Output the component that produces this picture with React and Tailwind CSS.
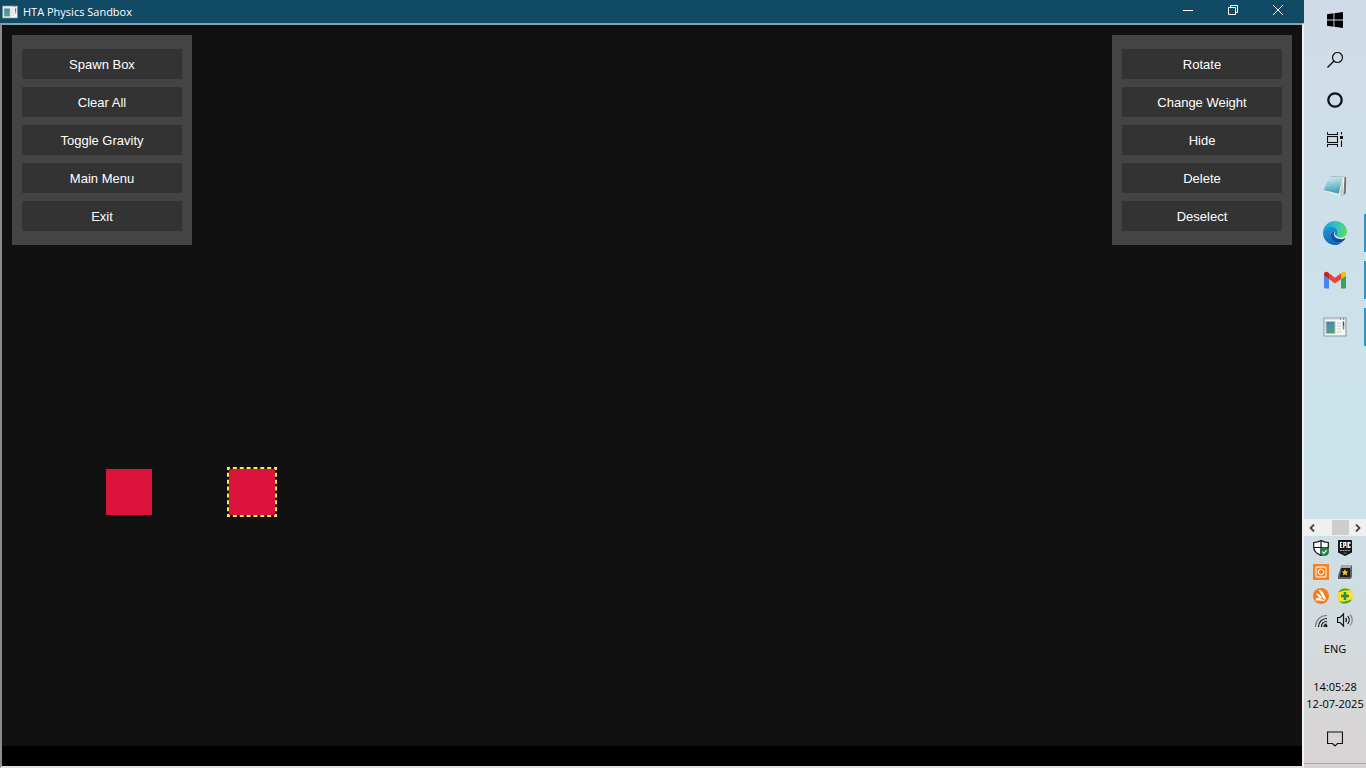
import React, { useState } from 'react';

const menuItems = ['Spawn Box', 'Clear All', 'Toggle Gravity', 'Main Menu', 'Exit'];
const objectItems = ['Rotate', 'Change Weight', 'Hide', 'Delete', 'Deselect'];

const initialBoxes = [
  { id: 1, x: 104, y: 444 },
  { id: 2, x: 227, y: 444 },
];

const AppIcon = ({ className }) => (
  <svg viewBox="0 0 24 20" className={className} aria-hidden="true">
    <defs>
      <linearGradient id="appPic" x1="0" y1="0" x2=".4" y2="1">
        <stop offset="0" stopColor="#4a78ad" />
        <stop offset=".5" stopColor="#4a96a0" />
        <stop offset="1" stopColor="#4ba273" />
      </linearGradient>
    </defs>
    <rect x="1" y="1" width="22" height="18" fill="#f6f7f8" stroke="#8d9196" />
    <path d="M1.500 2h21" stroke="#c6cace" />
    <path d="M17 2h1M20 2h1" stroke="#4a4f55" />
    <rect x="3" y="4.500" width="9" height="12" fill="url(#appPic)" stroke="#b4c0ca" />
    <path d="M14 6h4M14 9h4M14 12h4M14 15h4" stroke="#c6c9cc" />
    <path d="M20.500 4.500v5" stroke="#2a5f9c" strokeWidth="1.500" />
    <path d="M20.500 9.500v3" stroke="#4aa56c" strokeWidth="1.500" />
  </svg>
);

const WindowsIcon = () => (
  <svg viewBox="0 0 16 16" className="w-4 h-4">
    <path d="M0 2.200 6.500 1.300V7.500H0zM7.400 1.200 16 0v7.500H7.400zM0 8.500h6.500v6.200L0 13.800zM7.400 8.500H16V16l-8.600-1.200z" fill="#000" />
  </svg>
);

const SearchIcon = () => (
  <svg viewBox="0 0 16 16" className="w-4 h-4" fill="none" stroke="#111">
    <circle cx="10.500" cy="5.500" r="5" strokeWidth="1.200" />
    <path d="M7 9 .5 15.500" strokeWidth="1.400" />
  </svg>
);

const CortanaIcon = () => (
  <svg viewBox="0 0 16 16" className="w-4 h-4">
    <circle cx="8" cy="8" r="6.700" fill="none" stroke="#10131a" strokeWidth="2.300" />
  </svg>
);

const TaskViewIcon = () => (
  <svg viewBox="0 0 16 16" className="w-4 h-4" fill="none" stroke="#111" strokeWidth="1.100">
    <path d="M.5 0v2.500h10V0M.5 15v-2.500h10V15" />
    <rect x=".5" y="4.500" width="10" height="6" />
    <path d="M14.500 0v2.500M14.500 8.500V15" />
    <rect x="13" y="4" width="3" height="3" fill="#111" stroke="none" />
  </svg>
);

const NotepadIcon = () => (
  <svg viewBox="0 0 24 24" className="w-6 h-6">
    <defs>
      <linearGradient id="note" x1=".3" y1="0" x2=".5" y2="1">
        <stop offset="0" stopColor="#d3edf2" />
        <stop offset=".5" stopColor="#83c6d5" />
        <stop offset="1" stopColor="#3c97b0" />
      </linearGradient>
    </defs>
    <path d="m20 2 3.200 1.200-.4 16.300-4.300 2.500z" fill="#7c7262" />
    <path d="M8 1.800 21.500 2.500 20.500 20.500l-4 1.500z" fill="#eef1f2" />
    <path d="M20 3.500 19.500 20.500l-3 1z" fill="#c3c9ca" />
    <path d="M6.500 2.500 19.500 3.500 15.800 19.800.5 16.300z" fill="url(#note)" />
    <path d="M.5 16.300 15.800 19.800l.8 2L1.500 18z" fill="#dfeaed" />
    <path d="m7 2.200 13 .8" stroke="#a5b6ba" />
  </svg>
);

const EdgeIcon = () => (
  <svg viewBox="0 0 24 24" className="w-6 h-6">
    <defs>
      <linearGradient id="edgeTop" x1="0" y1=".4" x2="1" y2=".5">
        <stop offset="0" stopColor="#229bdc" />
        <stop offset=".5" stopColor="#2dc2c9" />
        <stop offset="1" stopColor="#5bdb5a" />
      </linearGradient>
      <linearGradient id="edgeMid" x1="0" y1="0" x2=".3" y2="1">
        <stop offset="0" stopColor="#1f97dc" />
        <stop offset="1" stopColor="#1068ba" />
      </linearGradient>
      <linearGradient id="edgeLow" x1="0" y1="0" x2="1" y2="1">
        <stop offset="0" stopColor="#0f5fae" />
        <stop offset="1" stopColor="#123f7c" />
      </linearGradient>
    </defs>
    <path d="M0 12C0 5 5.500 0 12 0s12 4.800 12 10.500c0 3.900-3 6-6.200 6-2.600 0-4.300-.9-4.300-1.800 0-.7 1-1 1-2.900 0-2.500-2.600-4.800-6.200-4.800C4 7 .8 9.500 0 12z" fill="url(#edgeTop)" />
    <path d="M0 12C.6 8.600 4 6 8.300 6c3.700 0 6.200 2.600 6.200 5.800 0 1.900-1 2.200-1 2.900-1.700-.5-2.200-2.200-1.300-4.500-2.500.2-4.400 1-4.400 2.800 0 4.700 4.300 8.500 8.400 8.500 1.400 0 2.300-.3 3-.6C17.400 22.800 14.800 24 12 24 5.400 24 0 18.700 0 12z" fill="url(#edgeMid)" />
    <path d="M12.200 10.200C9.700 10 8 11.500 7.800 13.500c-.2 4.500 3.500 8 8.400 8.100 2.700.1 5-1.800 6.100-4 .2-.5-.2-.7-.6-.4-1 .6-2.400 1-3.900 1-4 0-7-2.200-7-5.100 0-1.100.5-2.100 1.400-2.900z" fill="url(#edgeLow)" />
  </svg>
);

const GmailIcon = () => (
  <svg viewBox="0 0 24 18" className="w-6 h-5">
    <path d="M1 4.500 6 8v9.500H2.500A1.500 1.500 0 0 1 1 16z" fill="#4285f4" />
    <path d="M23 4.500 18 8v9.500h3.500A1.500 1.500 0 0 0 23 16z" fill="#34a853" />
    <path d="M18 2.300V8l5-3.500V3c0-2.200-2.300-3-3.900-1.800z" fill="#fbbc04" />
    <path d="M6 8V2.300L12 6.800l6-4.500V8l-6 4.500z" fill="#ea4335" />
    <path d="M1 3v1.500L6 8V2.300L4.900 1.200C3.300 0 1 .8 1 3z" fill="#c5221f" />
  </svg>
);

const ShieldIcon = () => (
  <svg viewBox="0 0 16 16" className="w-4 h-4">
    <path d="M8 .6C6 2 3.500 2.500.7 2.500V7c0 4 3 6.700 7.300 8.400C12.300 13.700 15.300 11 15.300 7V2.500C12.500 2.500 10 2 8 .6z" fill="#fff" stroke="#111" strokeWidth="1.200" />
    <path d="M8 1v14M1 7.500h14" stroke="#111" strokeWidth="1.200" />
    <circle cx="11.500" cy="11.500" r="4.500" fill="#18864b" />
    <path d="m9.300 11.600 1.600 1.600 2.900-3.100" fill="none" stroke="#fff" strokeWidth="1.300" />
  </svg>
);

const EpicIcon = () => (
  <svg viewBox="0 0 16 16" className="w-4 h-4">
    <path d="M2 0h12a1 1 0 0 1 1 1v11.500L8 16l-7-3.500V1a1 1 0 0 1 1-1z" fill="#15171a" />
    <g fill="none" stroke="#fff" strokeWidth="1.100">
      <path d="M5.300 2.500H3.500v5h1.800M3.500 5h1.500" />
      <path d="M6.700 8V2.500h1.600v3H6.700" />
      <path d="M10 2v6" />
      <path d="M13 4V2.500h-1.500v5H13V6" />
    </g>
    <path d="M3 10.500h10" stroke="#a9adb0" strokeWidth="1.200" strokeDasharray="2 .6" />
    <path d="M6.500 13h3" stroke="#777b7e" />
  </svg>
);

const CameraIcon = () => (
  <svg viewBox="0 0 16 16" className="w-4 h-4">
    <rect width="16" height="16" fill="#f58220" />
    <g fill="none" stroke="#fff">
      <rect x="3" y="3" width="10" height="10" rx="1" />
      <circle cx="8" cy="8" r="2.800" />
    </g>
    <path d="M3 5.500V3h2.500M10.500 13H13v-2.500" stroke="#ffd8b0" fill="none" />
  </svg>
);

const StarIcon = () => (
  <svg viewBox="0 0 16 16" className="w-4 h-4">
    <path d="M4.500 1H15v12l-1.500 2H1V12z" fill="#5f6267" />
    <path d="M4.500 1H15l-2 3H3.800z" fill="#a4a7ac" />
    <path d="M4.500 4H13v9H3z" fill="#191a1c" />
    <path d="m8 5 1 2.300 2.500.2-1.900 1.600.6 2.400L8 10.200l-2.200 1.300.6-2.400-1.900-1.600L7 7.300z" fill="#f5c733" />
  </svg>
);

const AvastIcon = () => (
  <svg viewBox="0 0 16 16" className="w-4 h-4">
    <circle cx="8" cy="8" r="8" fill="#f57c1f" />
    <path d="M5.500 2.200c2-1 4 1 5.200 3.600 1 2.200 2 4.500 2.300 6.200L10.300 10.500C9 7.500 7.300 4.500 5.500 2.200z" fill="#fff" />
    <path d="M3.300 5.200c2.300.3 4.600 2.300 6 5L7 9.800C5.200 9 3.800 7.200 3.300 5.200zM2.500 12.600C2.800 10.600 4.500 9 6.600 10l6 2.900c-3.500-.3-6.800-.8-10.100-.3z" fill="#fff" />
  </svg>
);

const PlusIcon = () => (
  <svg viewBox="0 0 16 16" className="w-4 h-4">
    <circle cx="8" cy="8" r="8" fill="#f7de2f" />
    <path d="M1 4.500C4 0 10-1 14 2.800 10 1.700 6 2.800 1 4.500zM15 11.500C12 16 6 17 2 13.200c4 1.100 8 0 13-1.700z" fill="#37a13f" />
    <path d="M8 4v8M4 8h8" stroke="#25913a" strokeWidth="2.600" />
  </svg>
);

const WifiIcon = () => (
  <svg viewBox="0 0 16 16" className="w-4 h-4" fill="none" stroke="#111" strokeWidth="1.200">
    <path d="M2.500 15C2.500 8.500 7 3.500 14 3.500" stroke="#777" />
    <path d="M5.500 15c0-5 3.500-8.500 8.500-8.500M8.500 15c0-3.500 2-5.500 5.500-5.500M11 15c0-1.800 1.200-3 3-3" />
    <circle cx="13.300" cy="14" r="1.200" fill="#111" stroke="none" />
  </svg>
);

const VolumeIcon = () => (
  <svg viewBox="0 0 16 16" className="w-4 h-4" fill="none" stroke="#111" strokeWidth="1.200">
    <path d="M.6 5.500h2.500L6.500 2v12l-3.400-3.500H.6z" />
    <path d="M8.600 6c1 1.200 1 2.800 0 4M10.700 4.200c2 2.200 2 5.400 0 7.600" />
    <path d="M13 2.500c3 3 3 8 0 11" stroke="#888" />
  </svg>
);

const NoticeIcon = () => (
  <svg viewBox="0 0 16 16" className="w-4 h-4" fill="none" stroke="#111" strokeWidth="1.200">
    <path d="M.5 1h15v11.500h-5L8 15l-2.500-2.500h-5z" />
  </svg>
);

const systemItems = [
  { label: 'Start', Icon: WindowsIcon },
  { label: 'Search', Icon: SearchIcon },
  { label: 'Cortana', Icon: CortanaIcon },
  { label: 'Task View', Icon: TaskViewIcon },
];

const pinnedApps = [
  { label: 'Notepad', icon: <NotepadIcon />, running: false },
  { label: 'Edge', icon: <EdgeIcon />, running: true },
  { label: 'Gmail', icon: <GmailIcon />, running: true },
  { label: 'HTA Physics Sandbox', icon: <AppIcon className="w-6 h-5" />, running: true },
];

const trayItems = [
  { label: 'Security', Icon: ShieldIcon },
  { label: 'Epic Games', Icon: EpicIcon },
  { label: 'Capture', Icon: CameraIcon },
  { label: 'Star', Icon: StarIcon },
  { label: 'Avast', Icon: AvastIcon },
  { label: 'Protection', Icon: PlusIcon },
  { label: 'Network', Icon: WifiIcon },
  { label: 'Volume', Icon: VolumeIcon },
];

const Panel = ({ items, onAction }) => (
  <div className="relative z-10 flex flex-col gap-2 w-[180px] px-2.5 py-3.5 bg-[#444]">
    {items.map((item) => (
      <button
        key={item}
        type="button"
        onClick={() => onAction(item)}
        className="h-[30px] pt-0.5 bg-[#333] text-white text-[13px] leading-4 hover:bg-[#555]"
      >
        {item}
      </button>
    ))}
  </div>
);

const TitleBar = () => (
  <header className="flex items-center h-[23px] bg-[#114a65] text-white">
    <AppIcon className="w-4 h-3.5 ml-0.5" />
    <h1 className="ml-[5px] text-[11px] leading-4 font-['Open_Sans',sans-serif]">HTA Physics Sandbox</h1>
    <div className="ml-auto flex pr-1 pb-1">
      <button type="button" aria-label="Minimize" className="flex items-center justify-center w-[45px] h-5">
        <svg viewBox="0 0 10 10" className="w-2.5 h-2.5" stroke="#fff"><path d="M0 5.500h10" /></svg>
      </button>
      <button type="button" aria-label="Restore" className="flex items-center justify-center w-[45px] h-5">
        <svg viewBox="0 0 10 10" className="w-2.5 h-2.5" stroke="#fff" fill="none">
          <path d="M.5 2.500h7v7h-7zM2.500 2.500v-2h7v7h-2" />
        </svg>
      </button>
      <button type="button" aria-label="Close" className="flex items-center justify-center w-[45px] h-5">
        <svg viewBox="0 0 10 10" className="w-2.5 h-2.5" stroke="#fff"><path d="m0 0 10 10M10 0 0 10" /></svg>
      </button>
    </div>
  </header>
);

const Box = ({ box, selected, onSelect }) => (
  <button
    type="button"
    aria-label={`Box ${box.id}`}
    onClick={() => onSelect(box.id)}
    className="absolute w-[46px] h-[46px] bg-[#dc143c]"
    style={{ left: box.x, top: box.y }}
  >
    {selected && (
      <svg viewBox="0 0 50 50" className="absolute -top-0.5 -left-0.5 w-[50px] h-[50px] max-w-none">
        <rect x="1" y="1" width="48" height="48" fill="none" stroke="#ffeb3b" strokeWidth="2" strokeDasharray="4 2.857" strokeDashoffset="2" />
      </svg>
    )}
  </button>
);

const Taskbar = () => (
  <aside className="flex flex-col w-[62px] shrink-0 bg-linear-to-b from-[#d0dce7] via-[#cae4ec] via-60% to-[#d9d3d3] text-black font-['Open_Sans',sans-serif]">
    <nav className="flex flex-col">
      {systemItems.map(({ label, Icon }) => (
        <button key={label} type="button" aria-label={label} className="flex items-center justify-center h-10">
          <Icon />
        </button>
      ))}
    </nav>
    <nav className="flex flex-col gap-px mt-[3px]">
      {pinnedApps.map(({ label, icon, running }) => (
        <button key={label} type="button" aria-label={label} className="relative flex items-center justify-center h-[46px]">
          {icon}
          {running && <span className="absolute right-0 top-1 bottom-1 w-0.5 bg-[#2f93c4]" />}
        </button>
      ))}
    </nav>
    <div className="mt-auto flex items-center justify-between h-[17px] bg-[#f0f0f0]">
      <button type="button" aria-label="Scroll left" className="flex items-center justify-center w-4 h-4">
        <svg viewBox="0 0 8 8" className="w-2 h-2" fill="none" stroke="#444" strokeWidth="1.800"><path d="M6 .5 2.500 4 6 7.500" /></svg>
      </button>
      <div className="ml-auto w-[17px] h-[15px] bg-[#cdcdcd]" />
      <button type="button" aria-label="Scroll right" className="flex items-center justify-center w-[17px] h-4">
        <svg viewBox="0 0 8 8" className="w-2 h-2" fill="none" stroke="#444" strokeWidth="1.800"><path d="M2 .5 5.500 4 2 7.500" /></svg>
      </button>
    </div>
    <div className="grid grid-cols-2 px-[5px] mr-1">
      {trayItems.map(({ label, Icon }) => (
        <button key={label} type="button" aria-label={label} className="flex items-center justify-center h-6">
          <Icon />
        </button>
      ))}
    </div>
    <button type="button" className="h-8 pt-0.5 text-[11px] leading-4">ENG</button>
    <div className="mt-3.5 text-center text-[11px] leading-[17px] whitespace-nowrap">
      <p>14:05:28</p>
      <p>12-07-2025</p>
    </div>
    <button type="button" aria-label="Notifications" className="flex items-center justify-center h-[51px] pt-0.5">
      <NoticeIcon />
    </button>
    <div className="h-[5px] border-t border-[#a5a3a5]" />
  </aside>
);

const App = () => {
  const [boxes, setBoxes] = useState(initialBoxes);
  const [selectedId, setSelectedId] = useState(2);

  const handleAction = (action) => {
    if (action === 'Spawn Box') {
      setBoxes([...boxes, { id: Date.now(), x: 300 + boxes.length * 60, y: 444 }]);
    } else if (action === 'Clear All') {
      setBoxes([]);
    } else if (action === 'Delete') {
      setBoxes(boxes.filter((box) => box.id !== selectedId));
    } else if (action === 'Deselect') {
      setSelectedId(null);
    }
  };

  return (
    <div className="flex h-screen overflow-hidden font-['Liberation_Sans',Arial,sans-serif]">
      <div className="flex flex-col flex-1 min-w-0">
        <TitleBar />
        <main className="relative flex flex-col flex-1 border-2 border-t-[#8ba1a9] border-l-[#8c8c8c] border-r-[#f2f2f2] border-b-[#e3e3e3] bg-[#111]">
          <div className="flex items-start justify-between p-2.5">
            <Panel items={menuItems} onAction={handleAction} />
            <Panel items={objectItems} onAction={handleAction} />
          </div>
          {boxes.map((box) => (
            <Box key={box.id} box={box} selected={box.id === selectedId} onSelect={setSelectedId} />
          ))}
          <div className="mt-auto h-5 bg-black" />
        </main>
      </div>
      <Taskbar />
    </div>
  );
};

export default App;
